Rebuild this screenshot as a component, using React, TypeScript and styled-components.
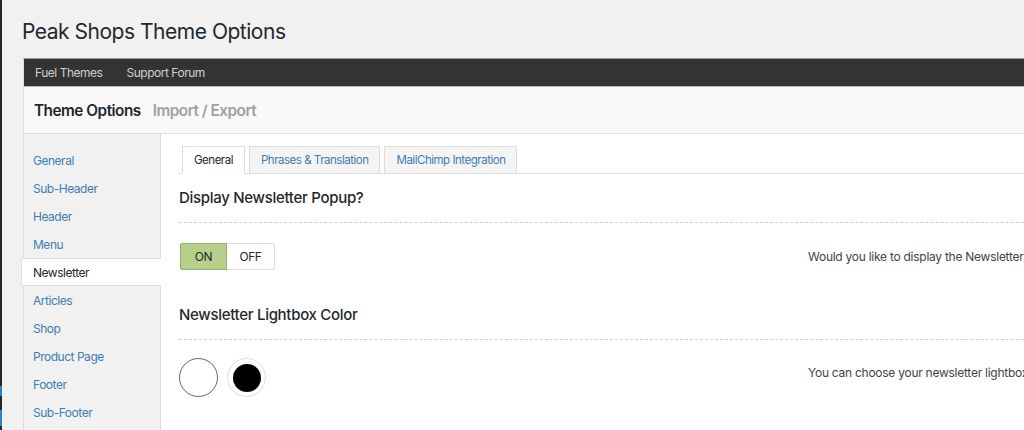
import React from "react";
import styled, { createGlobalStyle } from "styled-components";

const Global = createGlobalStyle`
  html, body { margin: 0; padding: 0; overflow: hidden; }
  body {
    background: #f1f1f1;
    font-family: Inter, "Noto Sans", "Liberation Sans", sans-serif;
    letter-spacing: -0.03em;
    color: #23282d;
    width: 1024px;
    height: 430px;
  }
`;

const Page = styled.div`
  display: flex;
  height: 430px;
  overflow: hidden;
`;

const AdminEdge = styled.div`
  width: 2px;
  flex: none;
  background: #23282d;
  display: flex;
  flex-direction: column;
  padding-top: 386px;
  gap: 14px;
`;

const EdgeMark = styled.span<{ $h: number }>`
  display: block;
  height: ${(p) => p.$h}px;
  background: #2a84c5;
`;

const Wrap = styled.div`
  padding-left: 21px;
  flex: none;
`;

const Title = styled.h1`
  margin: 0 0 0 -1px;
  padding: 18px 0 0;
  box-sizing: border-box;
  height: 58px;
  font-size: 21px;
  line-height: 28px;
  font-weight: 400;
  color: #23282d;
`;

const Panel = styled.div`
  width: 1160px;
  border: 1px solid #dcdcdc;
  border-top-color: #999;
  background: #fff;
`;

const TopBar = styled.div`
  height: 27px;
  background: #333;
  display: flex;
  align-items: center;
  padding-left: 11px;
  gap: 24px;
`;

const TopLink = styled.span`
  font-size: 12px;
  color: #cfcfcf;
`;

const HeaderBar = styled.div`
  height: 46px;
  background: #f9f9f9;
  border-top: 1px solid #bbb;
  border-bottom: 1px solid #ddd;
  display: flex;
  align-items: center;
  padding-left: 10px;
  gap: 12px;
`;

const HeaderTab = styled.span<{ $active?: boolean }>`
  font-size: 15.3px;
  font-weight: 600;
  color: ${(p) => (p.$active ? "#23282d" : "#a0a0a0")};
`;

const Body = styled.div`
  display: flex;
  height: 300px;
`;

const Sidebar = styled.ul`
  list-style: none;
  margin: 0;
  padding: 12px 0 0;
  width: 136px;
  flex: none;
  background: #f1f1f1;
  border-right: 1px solid #ddd;
`;

const NavItem = styled.li<{ $active?: boolean }>`
  height: 28px;
  box-sizing: border-box;
  display: flex;
  align-items: center;
  padding-left: ${(p) => (p.$active ? "11px" : "9px")};
  font-size: 12px;
  color: ${(p) => (p.$active ? "#23282d" : "#3f7db2")};
  ${(p) =>
    p.$active &&
    `
    background: #fff;
    border: 1px solid #ddd;
    border-right: none;
    margin-left: -3px;
    margin-right: -1px;
  `}
`;

const Main = styled.div`
  flex: 1;
  padding: 12px 0 0 18px;
`;

const Tabs = styled.div`
  display: flex;
  gap: 4px;
  padding-left: 3px;
  border-bottom: 1px solid #ddd;
  height: 27px;
`;

const Tab = styled.div<{ $active?: boolean }>`
  box-sizing: border-box;
  height: 28px;
  padding: 0 11px;
  display: flex;
  align-items: center;
  font-size: 11.5px;
  border: 1px solid #ddd;
  border-bottom-color: ${(p) => (p.$active ? "#fff" : "#ddd")};
  background: ${(p) => (p.$active ? "#fff" : "#f4f4f4")};
  color: ${(p) => (p.$active ? "#23282d" : "#3f7db2")};
`;

const SectionHead = styled.h3`
  margin: 0;
  padding: 13px 0 14px;
  font-size: 15px;
  line-height: 21px;
  font-weight: 500;
  letter-spacing: -0.3px;
  color: #23282d;
  border-bottom: 1px dashed #cfcfcf;
`;

const FieldRow = styled.div<{ $pad: number }>`
  display: grid;
  grid-template-columns: 629px 1fr;
  padding: ${(p) => p.$pad}px 0 21px;
  min-height: 27px;
`;

const Desc = styled.div<{ $top: number }>`
  font-size: 12px;
  letter-spacing: -0.26px;
  color: #444;
  padding-top: ${(p) => p.$top}px;
  white-space: nowrap;
`;

const Toggle = styled.div`
  display: flex;
  margin-left: 1px;
`;

const ToggleBtn = styled.div<{ $on?: boolean }>`
  box-sizing: border-box;
  height: 27px;
  width: ${(p) => (p.$on ? "47px" : "48px")};
  display: flex;
  align-items: center;
  justify-content: center;
  font-size: 12px;
  color: #23282d;
  background: ${(p) => (p.$on ? "#b6d08c" : "#fff")};
  border: 1px solid ${(p) => (p.$on ? "#94b36a" : "#ddd")};
  ${(p) => !p.$on && "border-left: none;"}
  border-radius: ${(p) => (p.$on ? "2px 0 0 2px" : "0 2px 2px 0")};
`;

const Swatches = styled.div`
  display: flex;
  gap: 9px;
`;

const Swatch = styled.div<{ $color: string; $selected?: boolean }>`
  box-sizing: border-box;
  width: 39px;
  height: 39px;
  border-radius: 50%;
  border: 1px solid ${(p) => (p.$selected ? "#666" : "#ddd")};
  background: #fff;
  display: flex;
  align-items: center;
  justify-content: center;
  &::after {
    content: "";
    width: ${(p) => (p.$color === "#fff" ? "0" : "28px")};
    height: ${(p) => (p.$color === "#fff" ? "0" : "28px")};
    border-radius: 50%;
    background: ${(p) => p.$color};
  }
`;

const navItems = [
  "General",
  "Sub-Header",
  "Header",
  "Menu",
  "Newsletter",
  "Articles",
  "Shop",
  "Product Page",
  "Footer",
  "Sub-Footer",
];

export default function App() {
  return (
    <>
      <Global />
      <Page>
        <AdminEdge>
          <EdgeMark $h={10} />
          <EdgeMark $h={16} />
        </AdminEdge>
        <Wrap>
          <Title>Peak Shops Theme Options</Title>
          <Panel>
            <TopBar>
              <TopLink>Fuel Themes</TopLink>
              <TopLink>Support Forum</TopLink>
            </TopBar>
            <HeaderBar>
              <HeaderTab $active>Theme Options</HeaderTab>
              <HeaderTab>Import / Export</HeaderTab>
            </HeaderBar>
            <Body>
              <Sidebar>
                {navItems.map((n) => (
                  <NavItem key={n} $active={n === "Newsletter"}>
                    {n}
                  </NavItem>
                ))}
              </Sidebar>
              <Main>
                <Tabs>
                  <Tab $active>General</Tab>
                  <Tab>Phrases &amp; Translation</Tab>
                  <Tab>MailChimp Integration</Tab>
                </Tabs>
                <SectionHead>Display Newsletter Popup?</SectionHead>
                <FieldRow $pad={20}>
                  <Toggle>
                    <ToggleBtn $on>ON</ToggleBtn>
                    <ToggleBtn>OFF</ToggleBtn>
                  </Toggle>
                  <Desc $top={6}>
                    Would you like to display the Newsletter Popup on your homepage?
                  </Desc>
                </FieldRow>
                <SectionHead>Newsletter Lightbox Color</SectionHead>
                <FieldRow $pad={18}>
                  <Swatches>
                    <Swatch $color="#fff" $selected />
                    <Swatch $color="#000" />
                  </Swatches>
                  <Desc $top={7}>
                    You can choose your newsletter lightbox color here.
                  </Desc>
                </FieldRow>
              </Main>
            </Body>
          </Panel>
        </Wrap>
      </Page>
    </>
  );
}
